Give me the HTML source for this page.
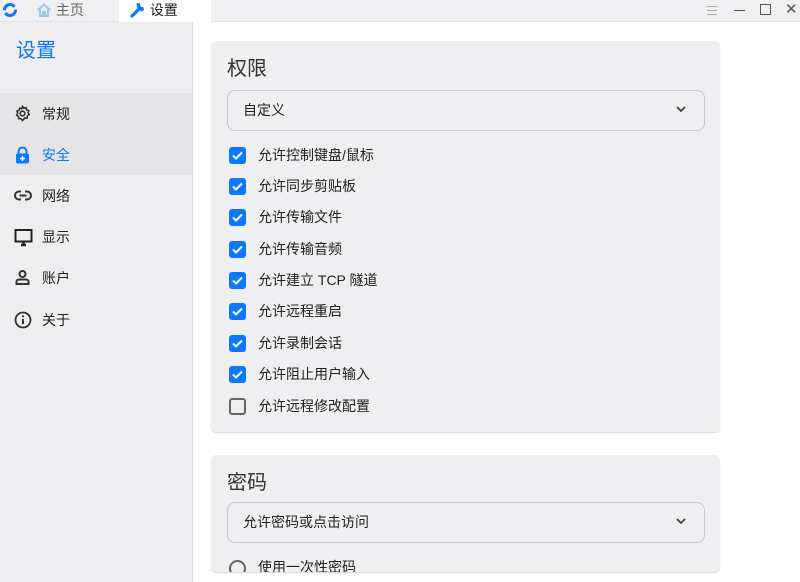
<!DOCTYPE html><html><head><meta charset="utf-8"><style>
*{box-sizing:border-box;margin:0;padding:0}
body{width:800px;height:582px;overflow:hidden;background:#fff;font-family:"Liberation Sans","Noto Sans CJK SC",sans-serif;color:#222;position:relative}
.top{position:absolute;left:0;top:0;width:800px;height:22px;background:#f0f0f2;border-bottom:1px solid #e2e2e4}
.tab{position:absolute;top:0;height:22px;font-size:14px;line-height:21px;white-space:nowrap}
.side{position:absolute;left:0;top:22px;width:193px;height:560px;background:#eeeef0;border-right:1px solid #dcdcde}
.item{position:absolute;left:0;width:192px;height:41px;font-size:14px;line-height:42px;padding-left:42px}
.item svg{position:absolute;left:14px;top:12px}
.card{position:absolute;left:211px;width:509px;background:#efeff1;border-radius:5px;box-shadow:0 1px 1px #d8d8da;overflow:hidden}
.h{position:absolute;left:16px;font-size:20px;color:#333}
.dd{position:absolute;left:16px;width:478px;height:41px;border:1px solid #c8c8ca;border-radius:8px;font-size:14px;line-height:39px;padding-left:15px}
.dd svg{position:absolute;right:18px;top:15px}
.cb{position:absolute;left:18px;width:17px;height:17px;border-radius:3px;background:#0a78ff}
.cb.off{background:none;border:2px solid #666}
.lbl{position:absolute;left:47px;font-size:14px;line-height:17px;white-space:nowrap}
.list{position:absolute;left:211px;top:41px;width:509px;height:391px}
</style></head><body>
<div class="top">
<svg style="position:absolute;left:2px;top:2px" width="16" height="16" viewBox="0 0 16 16"><circle cx="8" cy="8" r="5.5" fill="none" stroke="#0a78ff" stroke-width="3" stroke-dasharray="14 3"/></svg>
<div class="tab" style="left:36px;color:#666"><svg style="vertical-align:-2px" width="16" height="14" viewBox="0 0 16 14"><path d="M2 7L8 1.5 14 7M4 6v7h3V9h2v4h3V6" fill="none" stroke="#9cc7f5" stroke-width="2"/></svg> 主页</div>
<div class="tab" style="left:119px;width:92px;background:#fff;padding-left:10px"><svg style="vertical-align:-3px" width="17" height="17" viewBox="0 0 17 17"><path d="M3 15L10 8M9.5 2.5a4 4 0 0 0 5 5l-2 1-3-3z" stroke="#0a78ff" stroke-width="3.2" fill="#0a78ff" stroke-linecap="round"/></svg> 设置</div>
<div style="position:absolute;left:707px;top:6px;width:10px;height:9px;border-top:1px solid #aaa;border-bottom:1px solid #aaa"><div style="margin-top:3px;border-top:1px solid #aaa"></div></div>
<div style="position:absolute;left:734px;top:10px;width:11px;border-top:1px solid #555"></div>
<div style="position:absolute;left:760px;top:4px;width:11px;height:11px;border:1px solid #555"></div>
<div style="position:absolute;left:785px;top:0;font-size:15px;color:#555;line-height:19px">✕</div>
</div>
<div class="side">
<div style="position:absolute;left:16px;top:12px;font-size:20px;color:#0a78ff">设置</div>
<div class="item" style="top:71px;background:#e5e5e7"><svg width="17" height="17" viewBox="0 0 24 24"><path d="M12 2l2 2.5 3-.8.8 3 3 1.2-1 3 1.7 2.6-2.7 1.7-.2 3.2-3.2-.1L12 22l-2.2-2.7-3.2.1-.2-3.2L3.7 14.5 5.2 11.5 4.2 8.7l3-1.2.8-3 3 .8z" fill="none" stroke="#333" stroke-width="2.2"/><circle cx="12" cy="12" r="3.3" fill="none" stroke="#333" stroke-width="2.2"/></svg>常规</div>
<div class="item" style="top:112px;background:#e5e5e7;color:#0a78ff"><svg width="17" height="18" viewBox="0 0 17 18"><path d="M4.5 8V5.5a4 4 0 0 1 8 0V8" fill="none" stroke="#0a78ff" stroke-width="2"/><rect x="2" y="7.5" width="13" height="10" rx="2" fill="#0a78ff"/><path d="M8.5 10v5M6 12.5h5" stroke="#fff" stroke-width="1.5"/></svg>安全</div>
<div class="item" style="top:153px"><svg width="18" height="17" viewBox="0 0 18 17"><path d="M7 4.5H5a4 4 0 0 0 0 8h2M11 4.5h2a4 4 0 0 1 0 8h-2M5.5 8.5h7" fill="none" stroke="#333" stroke-width="2"/></svg>网络</div>
<div class="item" style="top:194px"><svg width="19" height="19" viewBox="0 0 19 19"><rect x="1.5" y="2" width="16" height="11.5" fill="none" stroke="#222" stroke-width="2"/><path d="M7 17h5M9.5 13v4" stroke="#222" stroke-width="2.5"/></svg>显示</div>
<div class="item" style="top:235px"><svg width="17" height="17" viewBox="0 0 17 17"><circle cx="8.5" cy="5" r="3" fill="none" stroke="#333" stroke-width="2"/><path d="M2.5 15v-2.5c0-1 1-2 2.5-2h7c1.5 0 2.5 1 2.5 2V15z" fill="none" stroke="#333" stroke-width="2"/></svg>账户</div>
<div class="item" style="top:277px"><svg width="18" height="18" viewBox="0 0 18 18"><circle cx="9" cy="9" r="7.5" fill="none" stroke="#333" stroke-width="1.8"/><path d="M9 8v5" stroke="#333" stroke-width="2"/><circle cx="9" cy="5.3" r="1.1" fill="#333"/></svg>关于</div>
</div>
<div class="card" style="top:41px;height:391px">
<div class="h" style="top:11px">权限</div>
<div class="dd" style="top:49px">自定义<svg width="10" height="7" viewBox="0 0 10 7"><path d="M1 1l4 4 4-4" fill="none" stroke="#444" stroke-width="1.8"/></svg></div>
</div>
<div class="card" style="top:455px;height:117px">
<div class="h" style="top:11px">密码</div>
<div class="dd" style="top:47px">允许密码或点击访问<svg width="10" height="7" viewBox="0 0 10 7"><path d="M1 1l4 4 4-4" fill="none" stroke="#444" stroke-width="1.8"/></svg></div>
<div style="position:absolute;left:18px;top:105px;width:17px;height:17px;border:2px solid #666;border-radius:50%"></div>
<div class="lbl" style="top:104px">使用一次性密码</div>
</div>
<div class="list">
<div class="cb" style="top:106px"><svg width="17" height="17"><path d="M4 8.5l3 3 6-6" fill="none" stroke="#fff" stroke-width="2"/></svg></div><div class="lbl" style="top:106px">允许控制键盘/鼠标</div>
<div class="cb" style="top:137px"><svg width="17" height="17"><path d="M4 8.5l3 3 6-6" fill="none" stroke="#fff" stroke-width="2"/></svg></div><div class="lbl" style="top:137px">允许同步剪贴板</div>
<div class="cb" style="top:168px"><svg width="17" height="17"><path d="M4 8.5l3 3 6-6" fill="none" stroke="#fff" stroke-width="2"/></svg></div><div class="lbl" style="top:168px">允许传输文件</div>
<div class="cb" style="top:200px"><svg width="17" height="17"><path d="M4 8.5l3 3 6-6" fill="none" stroke="#fff" stroke-width="2"/></svg></div><div class="lbl" style="top:200px">允许传输音频</div>
<div class="cb" style="top:231px"><svg width="17" height="17"><path d="M4 8.5l3 3 6-6" fill="none" stroke="#fff" stroke-width="2"/></svg></div><div class="lbl" style="top:231px">允许建立 TCP 隧道</div>
<div class="cb" style="top:262px"><svg width="17" height="17"><path d="M4 8.5l3 3 6-6" fill="none" stroke="#fff" stroke-width="2"/></svg></div><div class="lbl" style="top:262px">允许远程重启</div>
<div class="cb" style="top:294px"><svg width="17" height="17"><path d="M4 8.5l3 3 6-6" fill="none" stroke="#fff" stroke-width="2"/></svg></div><div class="lbl" style="top:294px">允许录制会话</div>
<div class="cb" style="top:325px"><svg width="17" height="17"><path d="M4 8.5l3 3 6-6" fill="none" stroke="#fff" stroke-width="2"/></svg></div><div class="lbl" style="top:325px">允许阻止用户输入</div>
<div class="cb off" style="top:357px"></div><div class="lbl" style="top:357px">允许远程修改配置</div>
</div>
</body></html>
